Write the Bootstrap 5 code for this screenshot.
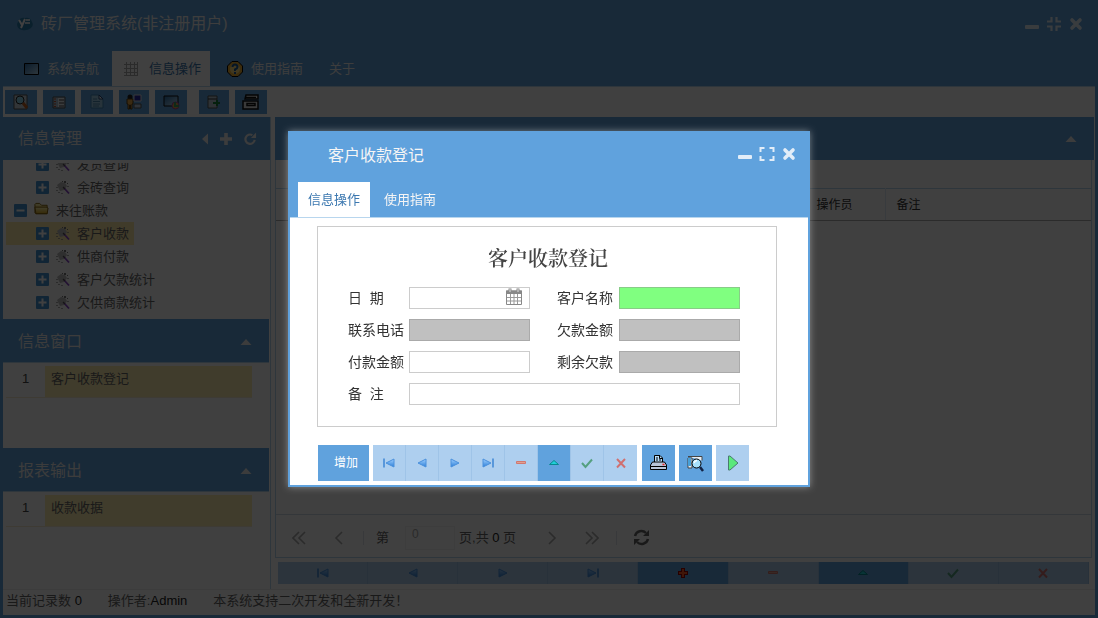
<!DOCTYPE html>
<html lang="zh-CN">
<head>
<meta charset="utf-8">
<meta name="viewport" content="width=device-width, initial-scale=1">
<title>砖厂管理系统</title>
<link href="https://cdn.jsdelivr.net/npm/bootstrap@5.3.0/dist/css/bootstrap.min.css" rel="stylesheet">
<style>
:root{--blue:#60a2dd;--pale:#aecfef;--line:#b8d6ee}
body{font:13px/20px "Liberation Sans","Noto Sans CJK SC",sans-serif;color:#666;background:#fff}
svg{display:block;flex:none}
button{font:inherit;border:0;padding:0;color:inherit;background:none}
a{color:inherit;text-decoration:none}
.shell{border:solid var(--blue);border-width:0 3px 3px}
.titlebar{background:var(--blue);color:#f2f2f2;height:51px;padding:0 8px 4px 14px}
.titlebar h1,.panel-head h2,.dlg-head h2{font-size:16px;line-height:24px;margin:0;font-weight:400}
.win-btn{width:22px;height:22px;color:#e2edf8}
.ribbon{background:var(--blue);border-bottom:1px solid var(--line);color:#f2f2f2}
.ribbon a{height:35px;padding:0 9px}
.ribbon a.on{background:#fff;color:#3c78b0}
.tools{padding:3px 2px;height:30px;gap:6px}
.tools button{width:32px;height:24px;background:var(--blue)}
.tools button.slim{width:30px}
.tools .apart{margin-left:6px}
.side{width:268px;border-right:1px solid var(--line)}
.panel-head{background:var(--blue);color:#eee;height:43px;padding:1px 13px 0 15px}
.side .stacked{height:44px;margin-right:1px;padding-top:3px;border-bottom:1px solid var(--line)}
.tree{height:151px;margin:3px 0 5px;overflow:hidden}
.tree li{height:23px;padding-left:30px}
.tree li.root{padding-left:8px}
.tree li>span{gap:7px;padding:0 5px 0 3px;height:23px}
.tree li.sel{background:linear-gradient(#ffe9a6,#ffe9a6) 3px 0/128px 100% no-repeat}
.rowlist{margin:3px 19px 0 3px;width:246px}
.rowlist td{height:31px;padding:2px 6px 6px;border-bottom:1px solid #f5e9d0;vertical-align:middle}
.rowlist td:first-child{width:39px;text-align:center;color:#444}
.rowlist td:last-child{background:#ffeeb0}
.info{height:85px}
.right-pane{margin:0 1px 0 4px}
.gridbox{border:solid var(--line);border-width:0 1px 1px;margin-right:2px;padding-top:28px}
.gridbox table{border-top:1px solid var(--line)}
.gridbox th{height:32px;font-weight:400;font-size:12px;padding:0 11px;border-right:1px solid #ddeaf5;border-bottom:1px solid #aaa;color:#333}
.gridbox th:last-child{border-right:0}
.pager{height:43px;border-top:1px solid #cfdce6;color:#666;padding:3px 0 0 3px}
.pager button{width:40px;height:30px;color:#aaa}
.pager button.renew{color:#666}
.pager .sep{width:1px;height:14px;background:#dde4ea}
.pager input{width:50px;height:24px;border:1px solid #f2f2f2;font-size:12px;padding:0 6px 7px;color:#aaa;background:#fff}
.pager b,.status b{font-weight:400;color:#222}
.flip{transform:scaleX(-1)}
.recnav{background:var(--pale);margin:4px 5px 5px 3px}
.recnav button{height:22px;border-right:1px solid #9fc4e8}
.recnav button.on,.dlg-nav button.on{background:var(--blue)}
.status{height:26px;padding:0 3px 4px;gap:26px;border-top:1px solid #f0f0f0}
.shade{background:rgba(0,0,0,.75);z-index:1050}
.modal{z-index:1055}
.modal-dialog{max-width:522px}
.dlg{border:2px solid var(--blue);border-radius:0;box-shadow:0 0 7px rgba(255,255,255,.4);color:#333}
.dlg-head{background:var(--blue);color:#f5f5f5;height:49px;padding:0 8px 4px 38px}
.dlg-head .win-btn{margin-bottom:4px}
.dlg-tabs{background:var(--blue);border-bottom:1px solid var(--line);color:#f5f5f5;padding-left:8px}
.dlg-tabs a{height:35px;padding:0 10px}
.dlg-tabs a.on{background:#fff;color:#3c78b0;margin-right:4px}
.dlg-body{padding:8px 31px 4px 27px}
.sheet{border:1px solid #ccc;padding:20px 35px 21px 30px}
.sheet h3{font:600 20px/24px "Liberation Serif","Noto Serif CJK SC","Noto Sans CJK SC",serif;color:#444;margin:0 0 16px;padding-left:7px}
.form-cells{display:grid;grid-template-columns:61px 121px 27px 62px 121px;row-gap:10px;align-items:center}
.form-cells label{font-size:14px;line-height:22px;white-space:pre}
.form-cells input{width:100%;height:22px;border:1px solid #ccc;padding:0 4px;display:block}
.form-cells .second{grid-column:4}
.form-cells .wide{grid-column:2/6}
.form-cells input.key{background:#80ff80;border-color:#8c8}
.form-cells input[readonly]{background:#c0c0c0;border-color:#aaa}
.cal{top:1px;right:8px}
.dlg-nav{padding:18px 0 0 1px;gap:4px}
.dlg-nav button{width:33px;height:36px;background:var(--pale)}
.dlg-nav .strip{margin-right:1px}
.dlg-nav .strip button{border-right:1px solid #9fc4e8}
.dlg-nav .strip button:last-child{border-right:0}
.dlg-nav .add{width:51px;color:#fff;padding-left:5px;font-size:12px}
</style>
</head>
<body>
<svg width="0" height="0" class="position-absolute" aria-hidden="true">
<defs>
<linearGradient id="g1" x2="1" y2="1"><stop stop-color="#2a6ca8"/><stop offset="1" stop-color="#b8dcf4"/></linearGradient>
<linearGradient id="g2" x2="0" y2="1"><stop stop-color="#9fd0ff"/><stop offset="1" stop-color="#2d7fd8"/></linearGradient>
<linearGradient id="g3" x2="0" y2="1"><stop stop-color="#fff6b0"/><stop offset="1" stop-color="#d8a820"/></linearGradient>
<symbol id="min" viewBox="0 0 16 16"><rect x="1" y="9" width="14" height="4" rx="1" fill="currentColor"/></symbol>
<symbol id="restore" viewBox="0 0 16 16"><path d="M1 5.500h4.500V1M10.500 1v4.500H15M1 10.500h4.500V15M10.500 15v-4.500H15" fill="none" stroke="currentColor" stroke-width="2.200"/></symbol>
<symbol id="max" viewBox="0 0 16 16"><path d="M1.500 6V2h4M10.500 2h4v4M1.500 10v4h4M10.500 14h4v-4" fill="none" stroke="currentColor" stroke-width="2"/></symbol>
<symbol id="close" viewBox="0 0 16 16"><path d="M4 4l8 8M12 4l-8 8" stroke="currentColor" stroke-width="3.600" stroke-linecap="round"/></symbol>
<symbol id="up" viewBox="0 0 12 12"><path d="M6 3l5.500 6H.5z" fill="currentColor"/></symbol>
<symbol id="left" viewBox="0 0 12 12"><path d="M2 6l6-5.500v11z" fill="currentColor"/></symbol>
<symbol id="plus" viewBox="0 0 12 12"><path d="M6 0v12M0 6h12" stroke="currentColor" stroke-width="3.600"/></symbol>
<symbol id="reload" viewBox="0 0 14 14"><path d="M11.500 8A5 5 0 1 1 9 2.800" fill="none" stroke="currentColor" stroke-width="2.400"/><path d="M7.500 6H13V0z" fill="currentColor"/></symbol>
<symbol id="exp" viewBox="0 0 13 13"><rect width="13" height="13" rx="1" fill="#4593d4"/><path d="M6.500 2.500v8M2.500 6.500h8" stroke="#fff" stroke-width="2"/></symbol>
<symbol id="col" viewBox="0 0 13 13"><rect width="13" height="13" rx="1" fill="#4593d4"/><path d="M2.500 6.500h8" stroke="#fff" stroke-width="2"/></symbol>
<symbol id="wand" viewBox="0 0 14 16"><path d="M1 5l4-3 4 1 2 3-3 4-4 1z" fill="#bbb"/><path d="M8 1h2v2H8zM11 3h1v1h-1zM6 1h1v1H6z" fill="#777"/><path d="M1 7v1M1 10v1M3 12v1M6 13v1M12 6v1" stroke="#888" stroke-width="1.400"/><path d="M8 8l5 5.500" stroke="#8a48c8" stroke-width="1.800"/><path d="M7 7l2 2" stroke="#555" stroke-width="1.300"/></symbol>
<symbol id="folder" viewBox="0 0 16 16"><path d="M1 12V3l1-1h4l2 2h6v9H2z" fill="url(#g3)" stroke="#80600e"/><path d="M1 6h12l2 1-1 6H2z" fill="url(#g3)" stroke="#80600e"/></symbol>
<symbol id="first" viewBox="0 0 14 12"><path d="M2 1.500v9" stroke="#3d86d4" stroke-width="1.500"/><path d="M12 2v8L4 6z" fill="url(#g2)" stroke="#4a90dc"/></symbol>
<symbol id="prev" viewBox="0 0 14 12"><path d="M11 2v8L3 6z" fill="url(#g2)" stroke="#4a90dc"/></symbol>
<symbol id="next" viewBox="0 0 14 12"><path d="M3 2v8l8-4z" fill="url(#g2)" stroke="#4a90dc"/></symbol>
<symbol id="last" viewBox="0 0 14 12"><path d="M12 1.500v9" stroke="#3d86d4" stroke-width="1.500"/><path d="M2 2v8l8-4z" fill="url(#g2)" stroke="#4a90dc"/></symbol>
<symbol id="minus" viewBox="0 0 14 12"><path d="M2.500 4.500h9v2h-9z" fill="#e0a090" stroke="#d07870"/></symbol>
<symbol id="add" viewBox="0 0 14 12"><path d="M7 1v10M2 6h10" stroke="#900" stroke-width="4"/><path d="M7 2v8M3 6h8" stroke="#ff5a20" stroke-width="2"/></symbol>
<symbol id="edit" viewBox="0 0 14 12"><path d="M7 3.500l4.500 4h-9z" fill="#20d0d8" stroke="#088890"/></symbol>
<symbol id="ok" viewBox="0 0 14 12"><path d="M2 6l3.500 4L12 2.500" fill="none" stroke="#55a080" stroke-width="2"/></symbol>
<symbol id="no" viewBox="0 0 14 12"><path d="M3 2l8 8.500M11 2l-8 8.500" stroke="#d07070" stroke-width="2"/></symbol>
<symbol id="ch1" viewBox="0 0 14 14"><path d="M10 1L4 7l6 6" fill="none" stroke="currentColor" stroke-width="1.600"/></symbol>
<symbol id="ch2" viewBox="0 0 14 14"><path d="M7 1L1 7l6 6M13 1L7 7l6 6" fill="none" stroke="currentColor" stroke-width="1.600"/></symbol>
</defs></svg>

<div class="shell min-vh-100 d-flex flex-column">
<header>
 <div class="titlebar d-flex align-items-center">
  <svg width="16" height="16" viewBox="0 0 16 16"><path d="M2 4q2-3 6-2q5-1 7 4q2 3-1 6q-4 3-9 2q-5-1-5-6z" fill="#2a7fb0"/><path d="M2 4l3 5M8 3l-4 9" stroke="#fff" stroke-width="2"/><path d="M8 7h5M9 4h4" stroke="#fff" stroke-width="1.500"/></svg>
  <h1 class="ms-2 me-auto">砖厂管理系统(非注册用户)</h1>
  <button class="win-btn d-grid" aria-label="最小化"><svg class="m-auto" width="16" height="16"><use href="#min"/></svg></button>
  <button class="win-btn d-grid" aria-label="还原"><svg class="m-auto" width="16" height="16"><use href="#restore"/></svg></button>
  <button class="win-btn d-grid" aria-label="关闭"><svg class="m-auto" width="16" height="16"><use href="#close"/></svg></button>
 </div>
 <nav class="ribbon d-flex">
  <a href="#" class="d-flex align-items-center ms-2"><svg class="ms-1 me-2" width="15" height="12" viewBox="0 0 15 12"><path d="M.5.5h14v11H.500z" fill="url(#g1)" stroke="#000"/></svg>系统导航</a>
  <a href="#" class="on d-flex align-items-center ms-1 gap-2"><svg width="20" height="16" viewBox="0 0 20 16"><path d="M5.500 1v14M9.500 1v14M13.500 1v14M3 3.500h14M3 7.500h14M3 11.500h14M16.500 1v14M3 14.500h14" stroke="#aaa"/></svg>信息操作</a>
  <a href="#" class="d-flex align-items-center ms-1 gap-2"><svg class="ms-1" width="16" height="16" viewBox="0 0 16 16"><path d="M5 .5h6L15.500 5v6L11 15.500H5L.5 11V5z" fill="#f0b030" stroke="#000"/><circle cx="8" cy="8" r="5" fill="#ffe080"/><path d="M5.500 6q0-2.500 2.500-2.500T10.500 6Q10.500 7.500 8 8.500V10M8 11v2" fill="none" stroke="#1a5a98" stroke-width="2"/></svg>使用指南</a>
  <a href="#" class="d-flex align-items-center ms-2">关于</a>
 </nav>
</header>
<div class="tools d-flex">
 <button class="d-grid" aria-label="查询"><svg class="m-auto" width="16" height="16" viewBox="0 0 16 16"><path d="M1 1h13v14H1z" fill="#c8d4dc" stroke="#555"/><circle cx="7" cy="6" r="4" fill="#8fd8f0" stroke="#222"/><path d="M10 9l4 5" stroke="#c06020" stroke-width="3"/></svg></button>
 <button class="d-grid" aria-label="列表"><svg class="m-auto" width="16" height="14" viewBox="0 0 16 14"><path d="M2 2h12v11H2z" fill="#aac4d8" stroke="#555"/><path d="M3 4h2M3 6.500h2M3 9h2M3 11.500h2" stroke="#c05030"/><path d="M7 3h6v9H7z" fill="#e8eef2"/><path d="M8 5h5M8 8h5M8 11h5" stroke="#444"/></svg></button>
 <button class="d-grid" aria-label="文档"><svg class="m-auto" width="16" height="16" viewBox="0 0 16 16"><path d="M2 1h8l4 4v9H2z" fill="#9ccbe8" stroke="#3f88b8"/><path d="M10 1v4h4z" fill="#fff" stroke="#247"/><path d="M4 5h4M4 7.500h7M4 10h7M4 12h6" stroke="#4a88b0"/></svg></button>
 <button class="d-grid slim" aria-label="用户"><svg class="m-auto" width="16" height="16" viewBox="0 0 16 16"><circle cx="4" cy="3" r="2.500" fill="#222"/><path d="M1 5h6v5H6v5H4.500v-4h-1v4H2v-5H1z" fill="#e8a848" stroke="#5a3c10"/><path d="M8 1h7v6H8z" fill="#2828a8" stroke="#ddd"/><path d="M8 10h7v4H8z" fill="#bcd" stroke="#555"/></svg></button>
 <button class="d-grid" aria-label="显示"><svg class="m-auto" width="17" height="16" viewBox="0 0 17 16"><path d="M1 2h14v10H1z" fill="url(#g1)" stroke="#111"/><circle cx="12.500" cy="11.500" r="3.500" fill="#d8a840" stroke="#a040a0"/><path d="M12 8v4h4" stroke="#40a060" stroke-width="2" fill="none"/></svg></button>
 <button class="d-grid slim apart" aria-label="导出"><svg class="m-auto" width="16" height="14" viewBox="0 0 16 14"><path d="M2 1h9v12H2z" fill="#b8c8d4" stroke="#555"/><path d="M2 4h9" stroke="#333"/><path d="M7 8h7M11 5v6" stroke="#168038" stroke-width="2"/></svg></button>
 <button class="d-grid" aria-label="打印"><svg class="m-auto" width="18" height="16" viewBox="0 0 18 16"><path d="M4 1h12v4H3zM1 7h15v8H1z" fill="#e8e8e8" stroke="#111" stroke-width="1.500"/><path d="M4 3.500h10M5 9.500h8v2H5z" fill="#fff" stroke="#111" stroke-width="1.500"/></svg></button>
</div>
<main class="d-flex flex-grow-1">
 <aside class="side d-flex flex-column flex-shrink-0">
  <div class="panel-head d-flex align-items-center"><h2 class="me-auto">信息管理</h2>
   <button class="me-2" aria-label="收起"><svg width="12" height="12"><use href="#left"/></svg></button>
   <button class="me-2" aria-label="添加"><svg width="12" height="12"><use href="#plus"/></svg></button>
   <button class="ms-1" aria-label="刷新"><svg width="13" height="14"><use href="#reload"/></svg></button></div>
  <ul class="tree list-unstyled d-flex flex-column justify-content-end">
   <li><span class="d-flex align-items-center"><svg width="13" height="13"><use href="#exp"/></svg><svg width="14" height="16"><use href="#wand"/></svg>发货查询</span></li>
   <li><span class="d-flex align-items-center"><svg width="13" height="13"><use href="#exp"/></svg><svg width="14" height="16"><use href="#wand"/></svg>余砖查询</span></li>
   <li class="root"><span class="d-flex align-items-center"><svg width="13" height="13"><use href="#col"/></svg><svg class="mb-1" width="15" height="16"><use href="#folder"/></svg>来往账款</span></li>
   <li class="sel"><span class="d-flex align-items-center"><svg width="13" height="13"><use href="#exp"/></svg><svg width="14" height="16"><use href="#wand"/></svg>客户收款</span></li>
   <li><span class="d-flex align-items-center"><svg width="13" height="13"><use href="#exp"/></svg><svg width="14" height="16"><use href="#wand"/></svg>供商付款</span></li>
   <li><span class="d-flex align-items-center"><svg width="13" height="13"><use href="#exp"/></svg><svg width="14" height="16"><use href="#wand"/></svg>客户欠款统计</span></li>
   <li><span class="d-flex align-items-center"><svg width="13" height="13"><use href="#exp"/></svg><svg width="14" height="16"><use href="#wand"/></svg>欠供商款统计</span></li>
  </ul>
  <div class="panel-head stacked d-flex align-items-center justify-content-between"><h2>信息窗口</h2><button class="me-1" aria-label="折叠"><svg width="12" height="12"><use href="#up"/></svg></button></div>
  <div class="info"><table class="rowlist"><tr><td>1</td><td>客户收款登记</td></tr></table></div>
  <div class="panel-head stacked d-flex align-items-center justify-content-between"><h2>报表输出</h2><button class="me-1" aria-label="折叠"><svg width="12" height="12"><use href="#up"/></svg></button></div>
  <div class="flex-grow-1"><table class="rowlist"><tr><td>1</td><td>收款收据</td></tr></table></div>
 </aside>
 <section class="right-pane flex-grow-1 d-flex flex-column">
  <div class="panel-head d-flex align-items-center justify-content-end"><button class="me-1" aria-label="折叠"><svg width="12" height="12"><use href="#up"/></svg></button></div>
  <div class="gridbox flex-grow-1 d-flex flex-column">
   <table class="w-100"><colgroup><col><col style="width:80px"><col style="width:206px"></colgroup><thead><tr><th></th><th>操作员</th><th>备注</th></tr></thead></table>
   <div class="pager d-flex align-items-center mt-auto">
    <button class="d-grid" aria-label="首页"><svg class="m-auto" width="14" height="14"><use href="#ch2"/></svg></button>
    <button class="d-grid" aria-label="上页"><svg class="m-auto" width="14" height="14"><use href="#ch1"/></svg></button>
    <span class="sep ms-1"></span><label for="pg" class="ms-2 ps-1 me-3">第</label><input id="pg" type="text" value="0">
    <span class="ms-1">页,共 <b>0</b> 页</span><span class="sep ms-2 me-1 ps-1 bg-transparent"></span>
    <button class="d-grid" aria-label="下页"><svg class="m-auto flip" width="14" height="14"><use href="#ch1"/></svg></button>
    <button class="d-grid" aria-label="末页"><svg class="m-auto flip" width="14" height="14"><use href="#ch2"/></svg></button>
    <span class="sep ms-1 me-1"></span>
    <button class="renew d-grid" aria-label="刷新"><svg class="m-auto" width="17" height="17" viewBox="0 0 17 17"><path d="M2 7a6.500 6.500 0 0 1 11-3M15 10a6.500 6.500 0 0 1-11 3" fill="none" stroke="currentColor" stroke-width="2.500"/><path d="M16 1v6h-6zM1 16v-6h6z" fill="currentColor"/></svg></button>
   </div>
  </div>
  <div class="recnav d-flex">
   <button class="flex-fill d-grid" aria-label="第一条"><svg class="m-auto" width="14" height="12"><use href="#first"/></svg></button>
   <button class="flex-fill d-grid" aria-label="上一条"><svg class="m-auto" width="14" height="12"><use href="#prev"/></svg></button>
   <button class="flex-fill d-grid" aria-label="下一条"><svg class="m-auto" width="14" height="12"><use href="#next"/></svg></button>
   <button class="flex-fill d-grid" aria-label="最后"><svg class="m-auto" width="14" height="12"><use href="#last"/></svg></button>
   <button class="flex-fill d-grid on" aria-label="新增"><svg class="m-auto" width="14" height="12"><use href="#add"/></svg></button>
   <button class="flex-fill d-grid" aria-label="删除"><svg class="m-auto" width="14" height="12"><use href="#minus"/></svg></button>
   <button class="flex-fill d-grid on" aria-label="编辑"><svg class="m-auto" width="14" height="12"><use href="#edit"/></svg></button>
   <button class="flex-fill d-grid" aria-label="保存"><svg class="m-auto" width="14" height="12"><use href="#ok"/></svg></button>
   <button class="flex-fill d-grid" aria-label="取消"><svg class="m-auto" width="14" height="12"><use href="#no"/></svg></button>
  </div>
 </section>
</main>
<footer class="status d-flex align-items-center"><span>当前记录数 <b>0</b></span><span>操作者:<b>Admin</b></span><span>本系统支持二次开发和全新开发！</span></footer>
</div>

<div class="shade position-fixed top-0 bottom-0 start-0 end-0"></div>
<div class="modal d-block" role="dialog" aria-modal="true" aria-labelledby="dt">
<div class="modal-dialog modal-dialog-centered">
<div class="modal-content dlg">
 <div class="dlg-head d-flex align-items-center"><h2 id="dt" class="me-auto">客户收款登记</h2>
  <button class="win-btn d-grid" aria-label="最小化"><svg class="m-auto" width="16" height="16"><use href="#min"/></svg></button>
  <button class="win-btn d-grid" aria-label="最大化"><svg class="m-auto" width="16" height="16"><use href="#max"/></svg></button>
  <button class="win-btn d-grid" aria-label="关闭"><svg class="m-auto" width="16" height="16"><use href="#close"/></svg></button></div>
 <nav class="dlg-tabs d-flex"><a href="#" class="on d-flex align-items-center">信息操作</a><a href="#" class="d-flex align-items-center">使用指南</a></nav>
 <div class="dlg-body">
  <div class="sheet">
   <h3 class="text-center">客户收款登记</h3>
   <form class="form-cells">
    <label for="f1">日  期</label><div class="position-relative"><input id="f1" type="text"><svg class="cal position-absolute" width="16" height="17" viewBox="0 0 16 17"><path d="M.5 3h15v13.500H.500z" fill="#fff" stroke="#888"/><path d="M0 2.500h16V6H0z" fill="#888"/><path d="M4 .5v4M12 .5v4" stroke="#888" stroke-width="3"/><path d="M4 1v3M12 1v3" stroke="#ddd"/><path d="M4.500 6v10M8 6v10M11.500 6v10M1 9.500h14M1 13h14" stroke="#999"/></svg></div>
    <label for="f2" class="second">客户名称</label><input id="f2" type="text" class="key">
    <label for="f3">联系电话</label><input id="f3" type="text" readonly>
    <label for="f4" class="second">欠款金额</label><input id="f4" type="text" readonly>
    <label for="f5">付款金额</label><input id="f5" type="text">
    <label for="f6" class="second">剩余欠款</label><input id="f6" type="text" readonly>
    <label for="f7">备  注</label><input id="f7" type="text" class="wide">
   </form>
  </div>
  <div class="dlg-nav d-flex">
   <button class="add on">增加</button>
   <div class="strip d-flex">
    <button class="d-grid" aria-label="第一条"><svg class="m-auto" width="14" height="12"><use href="#first"/></svg></button>
    <button class="d-grid" aria-label="上一条"><svg class="m-auto" width="14" height="12"><use href="#prev"/></svg></button>
    <button class="d-grid" aria-label="下一条"><svg class="m-auto" width="14" height="12"><use href="#next"/></svg></button>
    <button class="d-grid" aria-label="最后"><svg class="m-auto" width="14" height="12"><use href="#last"/></svg></button>
    <button class="d-grid" aria-label="删除"><svg class="m-auto" width="14" height="12"><use href="#minus"/></svg></button>
    <button class="d-grid on" aria-label="编辑"><svg class="m-auto" width="14" height="12"><use href="#edit"/></svg></button>
    <button class="d-grid" aria-label="保存"><svg class="m-auto" width="14" height="12"><use href="#ok"/></svg></button>
    <button class="d-grid" aria-label="取消"><svg class="m-auto" width="14" height="12"><use href="#no"/></svg></button>
   </div>
   <button class="d-grid on" aria-label="打印"><svg class="m-auto" width="17" height="16" viewBox="0 0 17 16"><path d="M4.500 7V.5H10L12.500 3v4" fill="#b8dcf8" stroke="#000"/><path d="M6 3h2M6 5h2M9 5h2M9.500 1v2.500H12" fill="none" stroke="#000"/><path d="M2.500 7h12l2 3v4.500H.500V10z" fill="#b8c4d8" stroke="#000"/><path d="M1 11.500h15" stroke="#000"/><path d="M12.500 9.500h2" stroke="#e22" stroke-width="1.500"/></svg></button>
   <button class="d-grid on" aria-label="预览"><svg class="m-auto" width="17" height="17" viewBox="0 0 17 17"><path d="M1 1.500h14v4M1 3h4v10H1z" fill="#e8eef4" stroke="#444"/><path d="M1 3h3v8H1z" fill="#48a0d8"/><circle cx="9.500" cy="8.500" r="4.500" fill="#a8e0fa" stroke="#000"/><path d="M7 8q1-2.500 3-2.500" stroke="#fff" fill="none" stroke-width="1.500"/><path d="M13 12l3 4" stroke="#124" stroke-width="2.500"/></svg></button>
   <button class="d-grid" aria-label="执行"><svg class="m-auto" width="12" height="16" viewBox="0 0 12 16"><path d="M1.500 1v14H3l8-7-8-7z" fill="#5be87c" stroke="#4a7a70"/></svg></button>
  </div>
 </div>
</div></div></div>
<script src="https://cdn.jsdelivr.net/npm/bootstrap@5.3.0/dist/js/bootstrap.bundle.min.js"></script>
</body>
</html>
